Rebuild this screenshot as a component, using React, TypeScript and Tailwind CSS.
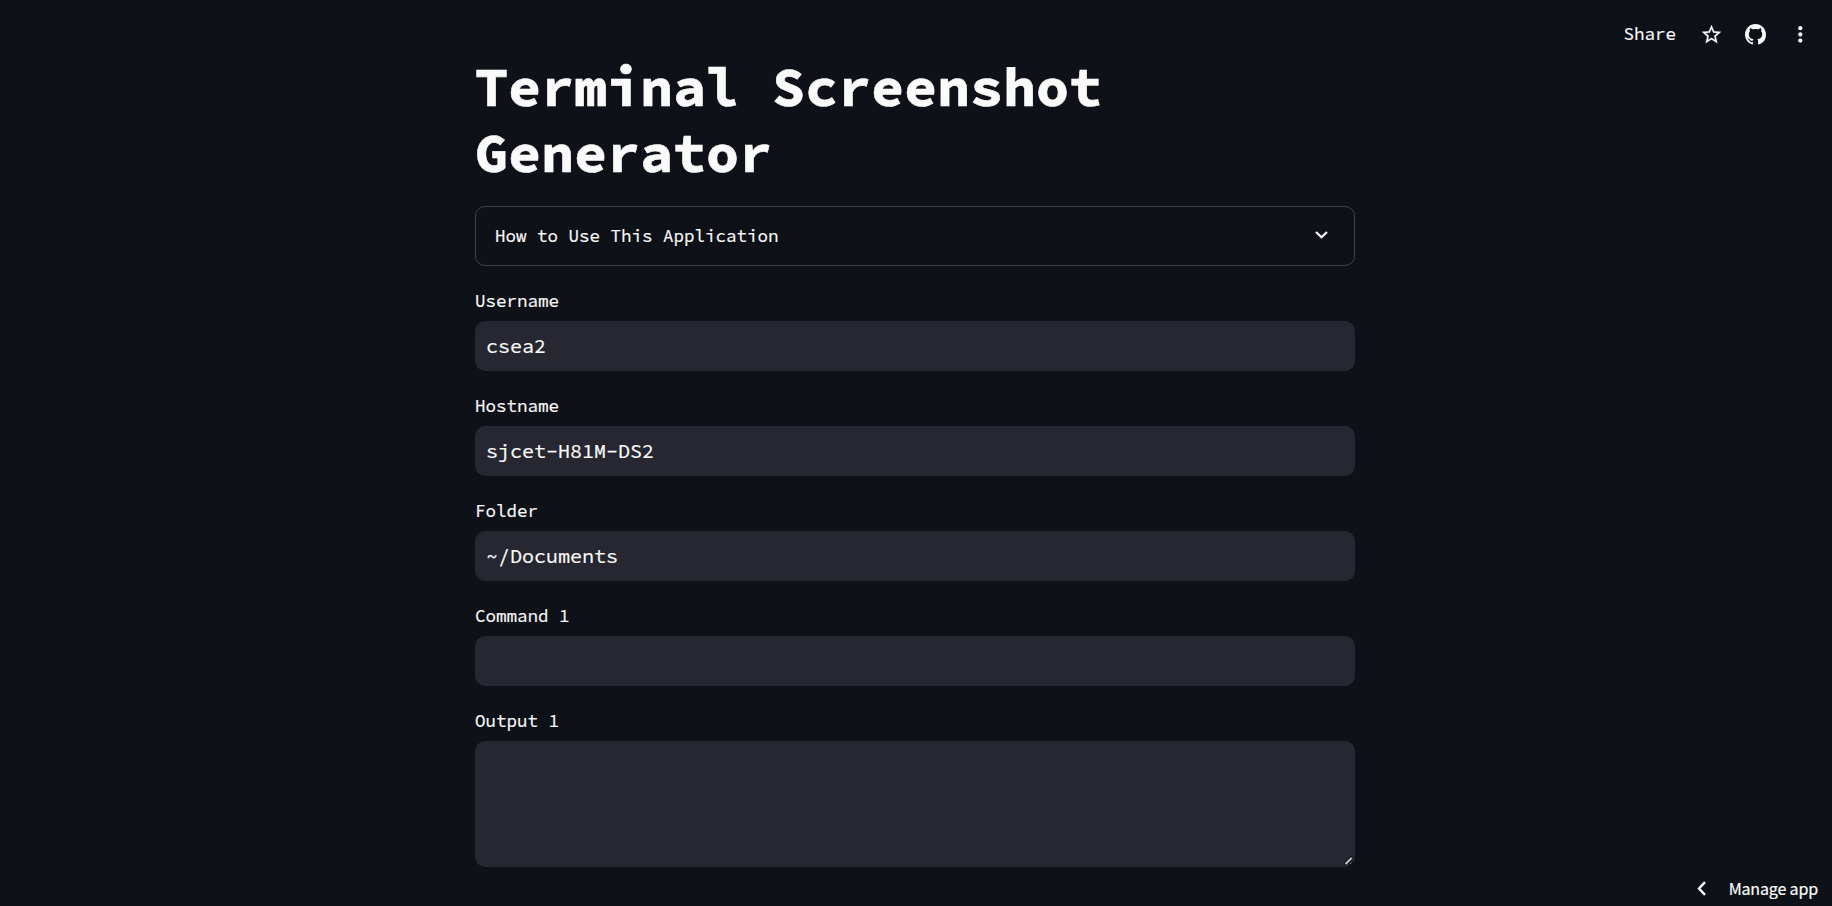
const MONO = "font-['Source_Code_Pro','Noto_Sans_Mono_CJK_SC','DejaVu_Sans_Mono',monospace]";

const fields = [
  { label: 'Username', value: 'csea2' },
  { label: 'Hostname', value: 'sjcet-H81M-DS2' },
  { label: 'Folder', value: '~/Documents' },
  { label: 'Command 1', value: '' },
];

function Toolbar() {
  return (
    <header className="absolute top-0 right-0 flex h-[68px] items-center pr-5">
      <span className="mr-[24px] text-[17.5px] leading-[30px] whitespace-nowrap">Share</span>
      <svg className="mr-[22px] size-[23px]" viewBox="0 0 24 24" fill="currentColor" stroke="currentColor" strokeWidth="0.2">
        <path d="m22 9.24-7.19-.62L12 2 9.19 8.63 2 9.24l5.46 4.73L5.82 21 12 17.27 18.18 21l-1.63-7.03L22 9.24zM12 15.4l-3.76 2.27 1-4.28-3.32-2.88 4.38-.38L12 6.1l1.71 4.04 4.38.38-3.32 2.88 1 4.28L12 15.4z" />
      </svg>
      <svg className="mr-6 size-[21px]" viewBox="0 0 16 16" fill="currentColor">
        <path d="M8 0C3.58 0 0 3.58 0 8c0 3.54 2.29 6.53 5.47 7.59.4.07.55-.17.55-.38 0-.19-.01-.82-.01-1.49-2.01.37-2.53-.49-2.69-.94-.09-.23-.48-.94-.82-1.13-.28-.15-.68-.52-.01-.53.63-.01 1.08.58 1.23.82.72 1.21 1.87.87 2.33.66.07-.52.28-.87.51-1.07-1.78-.2-3.64-.89-3.64-3.95 0-.87.31-1.59.82-2.15-.08-.2-.36-1.02.08-2.12 0 0 .67-.21 2.2.82.64-.18 1.32-.27 2-.27s1.36.09 2 .27c1.53-1.04 2.2-.82 2.2-.82.44 1.1.16 1.92.08 2.12.51.56.82 1.27.82 2.15 0 3.07-1.87 3.75-3.65 3.95.29.25.54.73.54 1.48 0 1.07-.01 1.93-.01 2.2 0 .21.15.46.55.38A8.01 8.01 0 0 0 16 8c0-4.42-3.58-8-8-8z" />
      </svg>
      <svg className="size-[22px]" viewBox="0 0 22 22" fill="currentColor">
        <circle cx="10.3" cy="5.2" r="2.1" />
        <circle cx="10.3" cy="11.4" r="2.1" />
        <circle cx="10.3" cy="17.6" r="2.1" />
      </svg>
    </header>
  );
}

export default function App() {
  return (
    <div className={`relative h-[906px] w-full overflow-hidden bg-[#0e1117] text-[#fafafa] [-webkit-text-stroke:0.2px_currentColor] ${MONO}`}>
      <Toolbar />
      <main className="mx-auto w-[880px] -translate-x-px pt-[54px]">
        <h1 className="h-[152px] text-[55px] leading-[66px] font-bold [-webkit-text-stroke:0.6px_currentColor]">
          Terminal Screenshot
          <br />
          Generator
        </h1>
        <button className="flex h-[60px] w-full items-center justify-between rounded-[10px] border border-[#3f4146] pr-[20px] pl-[19px]">
          <span className="text-[17.5px] leading-[30px]">How to Use This Application</span>
          <svg className="size-6" viewBox="0 0 24 24" fill="none" stroke="currentColor" strokeWidth="2.2">
            <path d="m6 8 5.5 5.3L17 8" />
          </svg>
        </button>
        {fields.map(({ label, value }) => (
          <div key={label} className="flex h-[105px] flex-col justify-end">
            <label className="mb-[5px] text-[17.5px] leading-[30px]">{label}</label>
            <input
              className="h-[50px] w-full rounded-[10px] bg-[#262730] px-[11px] pb-px text-[20px] outline-none"
              aria-label={label}
              defaultValue={value}
            />
          </div>
        ))}
        <div className="relative flex flex-col pt-5">
          <label className="mb-[5px] text-[17.5px] leading-[30px]">Output 1</label>
          <textarea
            className="block h-[126px] w-full resize-none rounded-[10px] bg-[#262730] px-[11px] outline-none"
            aria-label="Output 1"
          />
          <svg className="absolute right-px bottom-px h-[10px] w-[10px]" viewBox="0 0 10 10" fill="none">
            <path d="M0.5 8.5 8 1M6 9l3-3" stroke="#111319" strokeWidth="3.4" />
            <path d="M1.5 8 7.7 1.8" stroke="#c8c8ca" strokeWidth="1.9" />
            <path d="M6.3 7.7 7.3 6.7" stroke="#c8c8ca" strokeWidth="1" />
          </svg>
        </div>
      </main>
      <footer className="absolute right-[14px] bottom-0 flex h-[36px] items-center gap-[18px] font-['Source_Sans_Pro','Noto_Sans_CJK_SC',sans-serif]">
        <svg className="size-5" viewBox="0 0 20 20" fill="none" stroke="currentColor" strokeWidth="2.4">
          <path d="m14 4.2-6 6.3 6 6.3" />
        </svg>
        <span className="text-[16px] leading-[30px] tracking-[-0.15px] whitespace-nowrap">Manage app</span>
      </footer>
    </div>
  );
}
